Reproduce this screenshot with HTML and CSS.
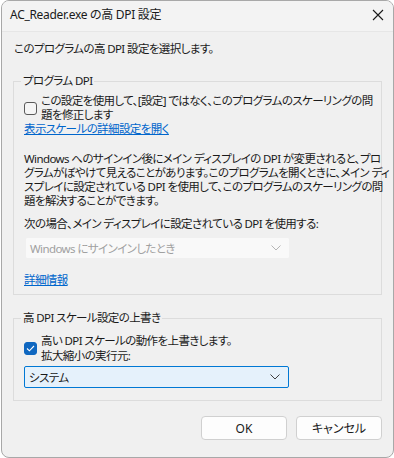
FILE: index.html
```html
<!DOCTYPE html>
<html lang="ja">
<head>
<meta charset="utf-8">
<link rel="stylesheet" href="styles.css">
</head>
<body>
<div class="window">
  <div class="titlebar">
    <span class="title">AC_Reader.exe の高 DPI 設定</span>
    <span class="close"><svg width="12" height="12" viewBox="0 0 12 12"><path d="M1 1L11 11M11 1L1 11" stroke="#1a1a1a" stroke-width="1.1" fill="none"/></svg></span>
  </div>
  <div class="content">
    <p class="intro">このプログラムの高 DPI 設定を選択します。</p>
    <fieldset class="group g1">
      <legend>プログラム DPI</legend>
      <div class="check-row">
        <span class="checkbox"></span>
        <span class="check-label tight">この設定を使用して、[設定] ではなく、このプログラムのスケーリングの問<br>題を修正します</span>
      </div>
      <a class="link first-link">表示スケールの詳細設定を開く</a>
      <p class="para">Windows へのサインイン後にメイン ディスプレイの DPI が変更されると、プロ<br>グラムがぼやけて見えることがあります。このプログラムを開くときに、メイン ディ<br>スプレイに設定されている DPI を使用して、このプログラムのスケーリングの問<br>題を解決することができます。</p>
      <p class="when">次の場合、メイン ディスプレイに設定されている DPI を使用する:</p>
      <div class="select disabled">
        <span>Windows にサインインしたとき</span>
        <svg class="chev" width="10" height="6" viewBox="0 0 10 6"><path d="M0.5 0.5L5 5L9.5 0.5" stroke="currentColor" fill="none" stroke-width="1"/></svg>
      </div>
      <a class="link more">詳細情報</a>
    </fieldset>
    <fieldset class="group g2">
      <legend>高 DPI スケール設定の上書き</legend>
      <div class="check-row">
        <span class="checkbox checked"><svg width="9" height="7" viewBox="0 0 9 7"><path d="M1 3.5L3.4 5.8L8 1" stroke="#fff" stroke-width="1.1" fill="none"/></svg></span>
        <span class="check-label loose">高い DPI スケールの動作を上書きします。<br>拡大縮小の実行元:</span>
      </div>
      <div class="select active">
        <span>システム</span>
        <svg class="chev" width="10" height="6" viewBox="0 0 10 6"><path d="M0.5 0.5L5 5L9.5 0.5" stroke="currentColor" fill="none" stroke-width="1"/></svg>
      </div>
    </fieldset>
    <div class="buttons">
      <button class="btn ok">OK</button>
      <button class="btn">キャンセル</button>
    </div>
  </div>
</div>
</body>
</html>
```
FILE: styles.css
```css
html, body {
  margin: 0;
  padding: 0;
  background: #ffffff;
}
body {
  font-family: "Noto Sans", "Noto Sans CJK JP", sans-serif;
  font-size: 11.5px;
  color: #1a1a1a;
  font-feature-settings: "palt" 1;
  letter-spacing: -0.6px;
}
.window {
  box-sizing: border-box;
  width: 393px;
  height: 458px;
  margin-left: 1px;
  background: #f0f0f0;
  border: 1px solid #a8a8a8;
  border-radius: 8px;
  overflow: hidden;
}
.titlebar {
  height: 30px;
  display: flex;
  align-items: center;
  justify-content: space-between;
  padding: 0 9px 0 8px;
  background: #f3f3f3;
  border-bottom: 1px solid #e6e6e6;
  box-sizing: content-box;
}
.title {
  font-size: 12px;
  letter-spacing: -0.3px;
  line-height: 16px;
  margin-top: -3px;
}
.close {
  display: flex;
  margin-top: -2px;
}
.content {
  padding: 0 11px 0 11px;
}
.intro {
  margin: 9px 0 0 1px;
  line-height: 16px;
}
.group {
  margin: 16px 0 0 0;
  padding: 7px 10px 7px 10px;
  border: 1px solid #dcdcdc;
  min-width: 0;
}
.group legend {
  padding: 0 2px;
  margin-left: -3px;
  line-height: 16px;
}
.g2 {
  margin-top: 15px;
  padding-bottom: 12px;
}
.check-row {
  display: flex;
  align-items: center;
  gap: 4px;
}
.checkbox {
  box-sizing: border-box;
  flex: none;
  width: 13px;
  height: 13px;
  border: 1px solid #5a5a5a;
  border-radius: 3px;
  background: #f5f5f5;
  display: flex;
  align-items: center;
  justify-content: center;
}
.checkbox.checked {
  background: #0f67c0;
  border-color: #0f67c0;
}
.check-label {
  white-space: nowrap;
}
.check-label.tight {
  line-height: 13.5px;
  margin-top: -2px;
}
.check-label.loose {
  line-height: 15px;
}
.link {
  display: block;
  width: max-content;
  color: #0066cc;
  text-decoration: underline;
  line-height: 14px;
  margin-top: 1px;
}
.para {
  margin: 16px 0 0 0;
  line-height: 14px;
  white-space: nowrap;
}
.when {
  margin: 9px 0 0 0;
  line-height: 14px;
  white-space: nowrap;
}
.select {
  box-sizing: border-box;
  width: 265px;
  height: 22px;
  margin-left: 1px;
  display: flex;
  align-items: center;
  justify-content: space-between;
  padding: 0 8px 0 4px;
  border-radius: 2px;
}
.select.disabled {
  margin-top: 6px;
  background: #f9f9f9;
  border: 1px solid #f0f0f0;
  color: #a0a0a0;
}
.select.disabled .chev {
  color: #b5b5b5;
}
.select.active {
  margin-top: 3px;
  background: #e5f1fb;
  border: 1px solid #0078d4;
  color: #1a1a1a;
  margin-left: 0;
}
.select.active .chev {
  color: #404040;
}
.more {
  margin-top: 14px;
}
.buttons {
  display: flex;
  justify-content: flex-end;
  gap: 9px;
  margin-top: 15px;
}
.btn {
  font: inherit;
  font-size: 12px;
  color: #1a1a1a;
  width: 86px;
  height: 24px;
  background: #fdfdfd;
  border: 1px solid #d0d0d0;
  border-radius: 4px;
  padding: 0;
}
```
